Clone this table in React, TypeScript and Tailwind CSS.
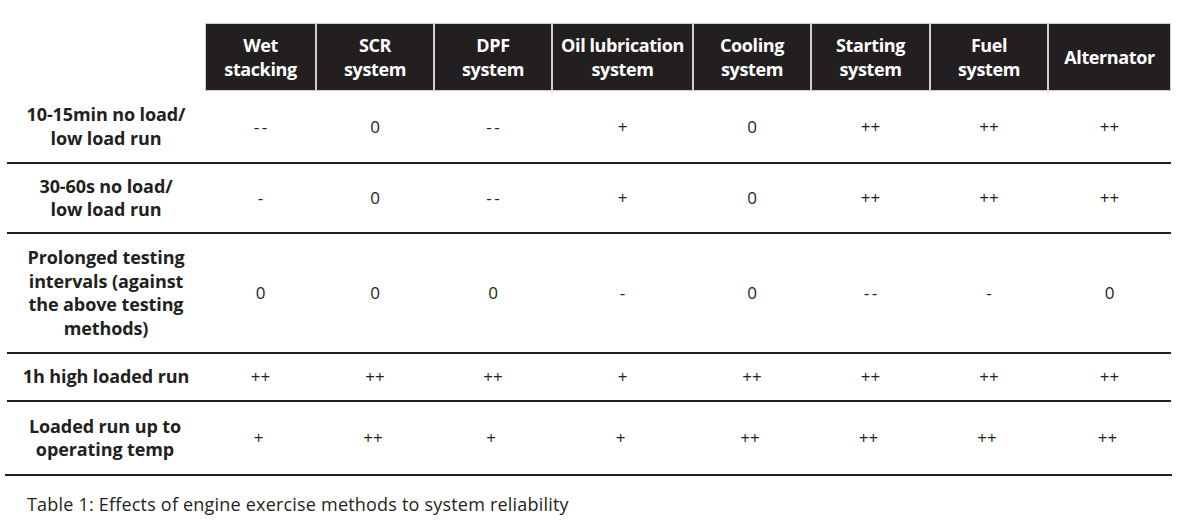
import React from "react";

const cols = "grid grid-cols-[198px_111px_118px_118px_141px_118px_119px_118px_123px]";

const headers: string[][] = [
  ["Wet", "stacking"],
  ["SCR", "system"],
  ["DPF", "system"],
  ["Oil lubrication", "system"],
  ["Cooling", "system"],
  ["Starting", "system"],
  ["Fuel", "system"],
  ["Alternator"],
];

type Row = { label: string[]; values: string[]; h: string };

const rows: Row[] = [
  { label: ["10-15min no load/", "low load run"], values: ["--", "0", "--", "+", "0", "++", "++", "++"], h: "h-[71px]" },
  { label: ["30-60s no load/", "low load run"], values: ["-", "0", "--", "+", "0", "++", "++", "++"], h: "h-[68px]" },
  {
    label: ["Prolonged testing", "intervals (against", "the above testing", "methods)"],
    values: ["0", "0", "0", "-", "0", "--", "-", "0"],
    h: "h-[118px]",
  },
  { label: ["1h high loaded run"], values: ["++", "++", "++", "+", "++", "++", "++", "++"], h: "h-[46px]" },
  { label: ["Loaded run up to", "operating temp"], values: ["+", "++", "+", "+", "++", "++", "++", "++"], h: "h-[72px]" },
];

export default function App() {
  return (
    <div className="w-[1187px] h-[532px] bg-white text-[#231f20] font-['Open_Sans',sans-serif] pt-[23px] pl-[7px]">
      <div className="w-[1164px]">
        <div className={cols}>
          <div />
          {headers.map((h, i) => (
            <div
              key={i}
              className="h-[68px] bg-[#231f20] border border-[#cfcfcf] flex flex-col items-center justify-center text-white font-bold text-[18px] leading-[24px] text-center tracking-[-0.4px]"
            >
              {h.map((l, j) => (
                <span key={j}>{l}</span>
              ))}
            </div>
          ))}
        </div>
        {rows.map((r, i) => (
          <div
            key={i}
            className={`${cols} border-b-2 border-[#231f20] ${i === rows.length - 1 ? "-ml-[2px] w-[1167px]" : ""}`}
          >
            <div
              className={`${r.h} flex flex-col items-center justify-center text-center font-bold text-[18px] leading-[23.5px] tracking-[-0.1px] ${
                i === rows.length - 1 ? "pl-[2px]" : ""
              }`}
            >
              {r.label.map((l, j) => (
                <span key={j}>{l}</span>
              ))}
            </div>
            {r.values.map((v, j) => (
              <div
                key={j}
                className={`${r.h} flex items-center justify-center text-[17px] font-normal ${
                  v.includes("-") ? "tracking-[2.5px] pl-[2.5px]" : "tracking-[0px]"
                }`}
              >
                {v}
              </div>
            ))}
          </div>
        ))}
        <div className="mt-[16px] pl-[20px] text-[18px] leading-[24px] tracking-[0.2px]">
          Table 1: Effects of engine exercise methods to system reliability
        </div>
      </div>
    </div>
  );
}
